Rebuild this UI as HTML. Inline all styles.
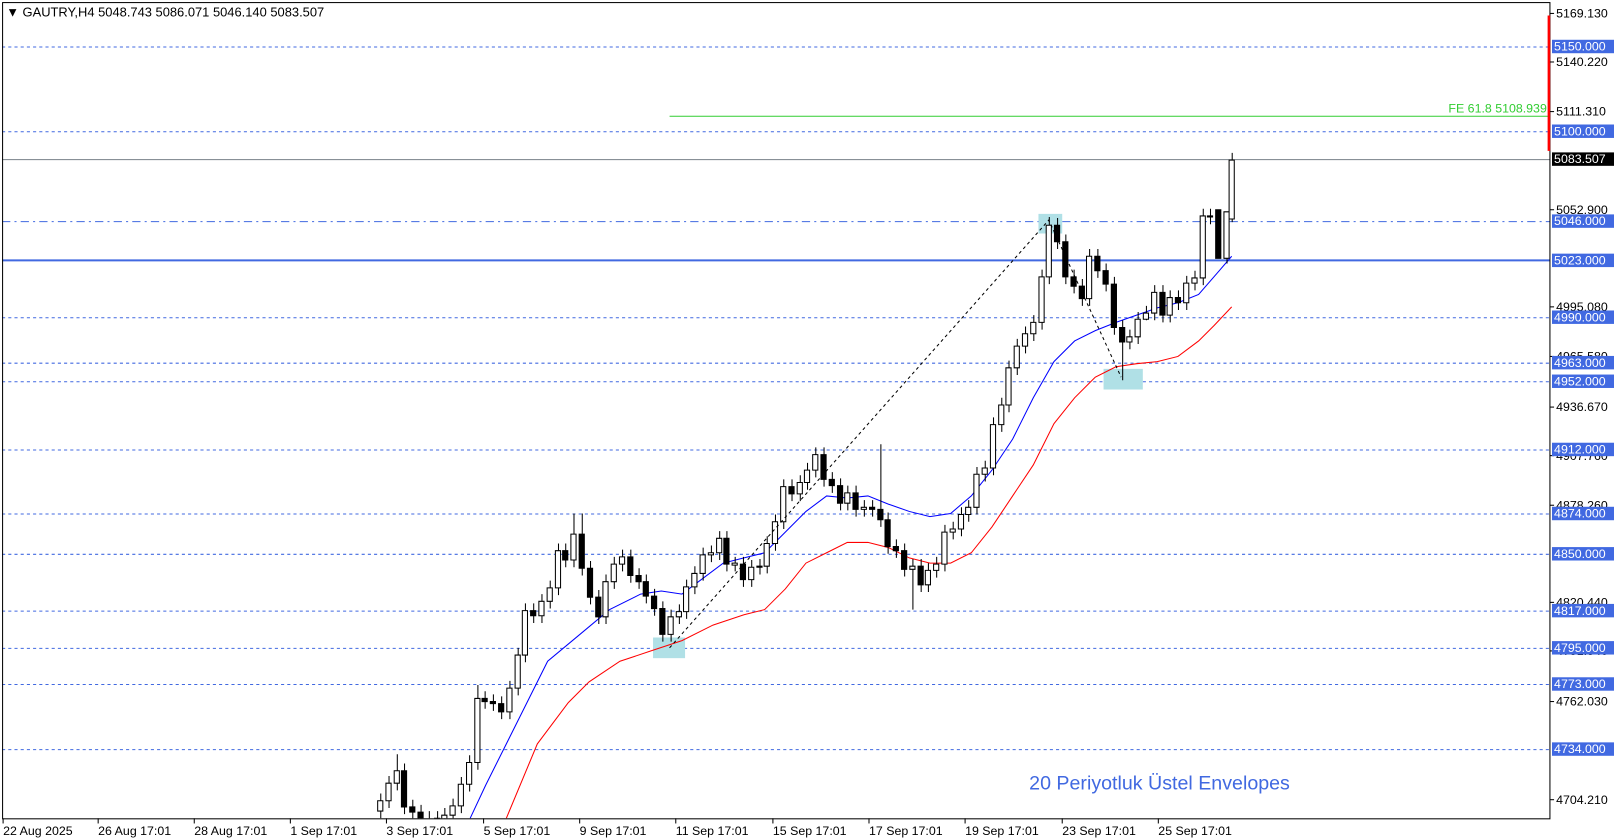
<!DOCTYPE html>
<html><head><meta charset="utf-8"><style>
html,body{margin:0;padding:0;background:#fff;overflow:hidden}
svg{display:block}
text{font-family:"Liberation Sans","DejaVu Sans",sans-serif;font-size:12px}
</style></head><body>
<svg width="1614" height="840" viewBox="0 0 1562 813" preserveAspectRatio="none" xmlns="http://www.w3.org/2000/svg">
<defs><clipPath id="cp"><rect x="2" y="2" width="1498" height="790"/></clipPath></defs>
<rect x="0" y="0" width="1562" height="813" fill="#fff"/>
<g stroke="#4169e1" stroke-width="1" stroke-dasharray="3,3" fill="none">
<line x1="2" y1="45.5" x2="1500" y2="45.5"/>
<line x1="2" y1="127.5" x2="1500" y2="127.5"/>
<line x1="2" y1="307.5" x2="1500" y2="307.5"/>
<line x1="2" y1="351.5" x2="1500" y2="351.5"/>
<line x1="2" y1="369.5" x2="1500" y2="369.5"/>
<line x1="2" y1="435.5" x2="1500" y2="435.5"/>
<line x1="2" y1="497.5" x2="1500" y2="497.5"/>
<line x1="2" y1="536.5" x2="1500" y2="536.5"/>
<line x1="2" y1="591.5" x2="1500" y2="591.5"/>
<line x1="2" y1="627.5" x2="1500" y2="627.5"/>
<line x1="2" y1="662.5" x2="1500" y2="662.5"/>
<line x1="2" y1="725.5" x2="1500" y2="725.5"/>
</g>
<line x1="2" y1="214.5" x2="1500" y2="214.5" stroke="#4169e1" stroke-dasharray="8,4,2,4"/>
<line x1="2" y1="252" x2="1500" y2="252" stroke="#4169e1" stroke-width="2"/>
<line x1="2" y1="154.5" x2="1500" y2="154.5" stroke="#778088"/>
<line x1="648" y1="112.5" x2="1500" y2="112.5" stroke="#32cd32"/>
<text x="1497" y="109" fill="#32cd32" text-anchor="end">FE 61.8 5108.939</text>
<rect x="632" y="617" width="31" height="20" fill="#b0e0e6"/>
<rect x="1005" y="207" width="23" height="19" fill="#b0e0e6"/>
<rect x="1068" y="357" width="38" height="20" fill="#b0e0e6"/>
<g clip-path="url(#cp)">
<polyline fill="none" stroke="#0000ff" points="455,792 470,760 500,700 530,640 560,615 590,590 620,575 640,572 660,575 680,560 700,545 720,540 740,535 760,515 780,495 800,480 820,482 840,480 860,488 880,495 900,500 920,497 940,480 960,455 980,425 1000,385 1020,350 1040,330 1060,320 1080,312 1100,305 1120,298 1140,293 1160,285 1180,262 1192,248"/>
<polyline fill="none" stroke="#ff0000" points="490,792 520,720 550,680 570,660 600,640 630,630 660,620 690,605 720,595 740,590 760,570 780,545 800,535 820,525 840,525 860,530 880,540 900,545 920,545 940,535 960,510 980,480 1000,450 1020,410 1040,385 1060,365 1080,355 1100,352 1120,350 1140,345 1160,330 1175,315 1192,297"/>
<path fill="none" stroke="#000" d="M368.5,768V792M376.5,751V782M384.5,730V765M391.5,739V788M399.5,774V793M407.5,779V811M415.5,785V811M423.5,785V806M430.5,782V806M438.5,773V796M446.5,752V787M454.5,731V766M462.5,663V745M469.5,669V686M477.5,672V688M485.5,674V696M493.5,659V696M501.5,627V673M508.5,584V641M516.5,584V603M524.5,575V603M532.5,562V589M540.5,526V576M547.5,526V549M555.5,497V549M563.5,497V557M571.5,543V585M579.5,571V604M586.5,556V604M594.5,539V570M602.5,532V553M610.5,532V564M618.5,550V570M625.5,556V584M633.5,570V596M641.5,582V621M649.5,590V621M657.5,585V604M664.5,561V599M672.5,548V575M680.5,530V562M688.5,528V544M696.5,514V542M703.5,514V553M711.5,539V553M719.5,539V568M727.5,542V568M735.5,541V556M742.5,519V555M750.5,498V533M758.5,464V512M766.5,464V485M774.5,460V485M781.5,448V474M789.5,433V462M797.5,433V471M805.5,457V477M813.5,463V494M820.5,470V494M828.5,470V500M836.5,484V500M844.5,484V500M852.5,430V510M859.5,496V536M867.5,522V540M875.5,526V558M883.5,541V590M891.5,541V573M898.5,545V573M906.5,539V559M914.5,508V553M922.5,505V522M930.5,491V519M937.5,484V505M945.5,452V498M953.5,446V466M961.5,404V460M969.5,385V418M976.5,349V399M984.5,328V363M992.5,316V342M1000.5,305V330M1008.5,261V319M1015.5,210V275M1023.5,211V241M1031.5,227V275M1039.5,261V284M1047.5,270V296M1054.5,241V296M1062.5,241V269M1070.5,255V282M1078.5,268V324M1086.5,310V368M1093.5,319V338M1101.5,302V333M1109.5,296V310M1117.5,276V310M1125.5,276V312M1132.5,281V312M1140.5,281V300M1148.5,267V300M1156.5,262V281M1164.5,202V276M1171.5,202V217M1179.5,203V234M1187.5,220V255M1192.5,148V215"/>
<path fill="#fff" stroke="#000" d="M365.5,775h5v10h-5zM373.5,758h5v17h-5zM381.5,746h5v12h-5zM427.5,789h5v10h-5zM435.5,780h5v9h-5zM443.5,759h5v21h-5zM451.5,738h5v21h-5zM459.5,676h5v62h-5zM490.5,666h5v23h-5zM498.5,634h5v32h-5zM505.5,591h5v43h-5zM521.5,582h5v14h-5zM529.5,569h5v13h-5zM537.5,533h5v36h-5zM552.5,517h5v25h-5zM583.5,563h5v34h-5zM591.5,546h5v17h-5zM599.5,539h5v7h-5zM646.5,597h5v17h-5zM654.5,592h5v5h-5zM661.5,568h5v24h-5zM669.5,555h5v13h-5zM677.5,537h5v18h-5zM685.5,535h5v2h-5zM693.5,521h5v14h-5zM708.5,545h5v2h-5zM724.5,549h5v12h-5zM732.5,548h5v1h-5zM739.5,526h5v22h-5zM747.5,505h5v21h-5zM755.5,471h5v34h-5zM771.5,467h5v11h-5zM778.5,455h5v12h-5zM786.5,440h5v15h-5zM817.5,477h5v10h-5zM833.5,491h5v2h-5zM880.5,548h5v3h-5zM895.5,552h5v14h-5zM903.5,546h5v6h-5zM911.5,515h5v31h-5zM919.5,512h5v3h-5zM927.5,498h5v14h-5zM934.5,491h5v7h-5zM942.5,459h5v32h-5zM950.5,453h5v6h-5zM958.5,411h5v42h-5zM966.5,392h5v19h-5zM973.5,356h5v36h-5zM981.5,335h5v21h-5zM989.5,323h5v12h-5zM997.5,312h5v11h-5zM1005.5,268h5v44h-5zM1012.5,218h5v50h-5zM1051.5,248h5v41h-5zM1090.5,326h5v5h-5zM1098.5,309h5v17h-5zM1106.5,303h5v6h-5zM1114.5,283h5v20h-5zM1129.5,288h5v17h-5zM1145.5,274h5v19h-5zM1153.5,269h5v5h-5zM1161.5,209h5v60h-5zM1184.5,205h5v45h-5zM1189.5,155h5v57h-5z"/>
<path fill="#000" stroke="#000" d="M388.5,746h5v35h-5zM396.5,781h5v5h-5zM404.5,786h5v18h-5zM420.5,792h5v7h-5zM466.5,676h5v3h-5zM474.5,679h5v2h-5zM482.5,681h5v8h-5zM513.5,591h5v5h-5zM544.5,533h5v9h-5zM560.5,517h5v33h-5zM568.5,550h5v28h-5zM576.5,578h5v19h-5zM607.5,539h5v18h-5zM615.5,557h5v6h-5zM622.5,563h5v14h-5zM630.5,577h5v12h-5zM638.5,589h5v25h-5zM700.5,521h5v25h-5zM716.5,546h5v15h-5zM763.5,471h5v7h-5zM794.5,440h5v24h-5zM802.5,464h5v6h-5zM810.5,470h5v17h-5zM825.5,477h5v16h-5zM841.5,491h5v2h-5zM849.5,493h5v10h-5zM856.5,503h5v26h-5zM864.5,529h5v4h-5zM872.5,533h5v18h-5zM888.5,548h5v18h-5zM1020.5,218h5v16h-5zM1028.5,234h5v34h-5zM1036.5,268h5v9h-5zM1044.5,277h5v12h-5zM1059.5,248h5v14h-5zM1067.5,262h5v13h-5zM1075.5,275h5v42h-5zM1083.5,317h5v14h-5zM1122.5,283h5v22h-5zM1137.5,288h5v5h-5zM1168.5,209h5v1h-5zM1176.5,203h5v47h-5z"/>
</g>
<polyline points="648,627 1015,213 1085,365" fill="none" stroke="#000" stroke-dasharray="3,3"/>
<rect x="2.5" y="2.5" width="1497.5" height="790" fill="none" stroke="#000" stroke-width="1"/>
<line x1="1499" y1="15" x2="1499" y2="146" stroke="#f00" stroke-width="2.5"/>
<text x="6" y="16" fill="#000" style="font-size:12.5px">▼ GAUTRY,H4  5048.743 5086.071 5046.140 5083.507</text>
<g stroke="#000">
<line x1="1500" y1="13" x2="1504" y2="13"/><line x1="1500" y1="60" x2="1504" y2="60"/><line x1="1500" y1="108" x2="1504" y2="108"/><line x1="1500" y1="203" x2="1504" y2="203"/><line x1="1500" y1="297" x2="1504" y2="297"/><line x1="1500" y1="345" x2="1504" y2="345"/><line x1="1500" y1="394" x2="1504" y2="394"/><line x1="1500" y1="441" x2="1504" y2="441"/><line x1="1500" y1="489" x2="1504" y2="489"/><line x1="1500" y1="583" x2="1504" y2="583"/><line x1="1500" y1="630" x2="1504" y2="630"/><line x1="1500" y1="679" x2="1504" y2="679"/><line x1="1500" y1="774" x2="1504" y2="774"/>
<line x1="3" y1="792" x2="3" y2="797"/><line x1="95" y1="792" x2="95" y2="797"/><line x1="188" y1="792" x2="188" y2="797"/><line x1="281" y1="792" x2="281" y2="797"/><line x1="374" y1="792" x2="374" y2="797"/><line x1="468" y1="792" x2="468" y2="797"/><line x1="561" y1="792" x2="561" y2="797"/><line x1="654" y1="792" x2="654" y2="797"/><line x1="748" y1="792" x2="748" y2="797"/><line x1="841" y1="792" x2="841" y2="797"/><line x1="934" y1="792" x2="934" y2="797"/><line x1="1028" y1="792" x2="1028" y2="797"/><line x1="1121" y1="792" x2="1121" y2="797"/>
</g>
<g fill="#000">
<text x="1506" y="17">5169.130</text><text x="1506" y="64">5140.220</text><text x="1506" y="112">5111.310</text><text x="1506" y="207">5052.900</text><text x="1506" y="301">4995.080</text><text x="1506" y="349">4965.580</text><text x="1506" y="398">4936.670</text><text x="1506" y="445">4907.760</text><text x="1506" y="493">4878.260</text><text x="1506" y="587">4820.440</text><text x="1506" y="634">4791.540</text><text x="1506" y="683">4762.030</text><text x="1506" y="778">4704.210</text>
<text x="3" y="808">22 Aug 2025</text><text x="95" y="808">26 Aug 17:01</text><text x="188" y="808">28 Aug 17:01</text><text x="281" y="808">1 Sep 17:01</text><text x="374" y="808">3 Sep 17:01</text><text x="468" y="808">5 Sep 17:01</text><text x="561" y="808">9 Sep 17:01</text><text x="654" y="808">11 Sep 17:01</text><text x="748" y="808">15 Sep 17:01</text><text x="841" y="808">17 Sep 17:01</text><text x="934" y="808">19 Sep 17:01</text><text x="1028" y="808">23 Sep 17:01</text><text x="1121" y="808">25 Sep 17:01</text>
</g>
<g fill="#4169e1">
<rect x="1502" y="38.5" width="60" height="13"/><rect x="1502" y="120.5" width="60" height="13"/><rect x="1502" y="207.5" width="60" height="13"/><rect x="1502" y="245.5" width="60" height="13"/><rect x="1502" y="300.5" width="60" height="13"/><rect x="1502" y="344.5" width="60" height="13"/><rect x="1502" y="362.5" width="60" height="13"/><rect x="1502" y="428.5" width="60" height="13"/><rect x="1502" y="490.5" width="60" height="13"/><rect x="1502" y="529.5" width="60" height="13"/><rect x="1502" y="584.5" width="60" height="13"/><rect x="1502" y="620.5" width="60" height="13"/><rect x="1502" y="655.5" width="60" height="13"/><rect x="1502" y="718.5" width="60" height="13"/>
</g>
<rect x="1502" y="147.5" width="60" height="13" fill="#000"/>
<g fill="#fff">
<text x="1504" y="49">5150.000</text><text x="1504" y="131">5100.000</text><text x="1504" y="158">5083.507</text><text x="1504" y="218">5046.000</text><text x="1504" y="256">5023.000</text><text x="1504" y="311">4990.000</text><text x="1504" y="355">4963.000</text><text x="1504" y="373">4952.000</text><text x="1504" y="439">4912.000</text><text x="1504" y="501">4874.000</text><text x="1504" y="540">4850.000</text><text x="1504" y="595">4817.000</text><text x="1504" y="631">4795.000</text><text x="1504" y="666">4773.000</text><text x="1504" y="729">4734.000</text>
</g>
<text x="996" y="764" fill="#4169e1" style="font-size:19px">20 Periyotluk Üstel Envelopes</text>
</svg>
</body></html>
